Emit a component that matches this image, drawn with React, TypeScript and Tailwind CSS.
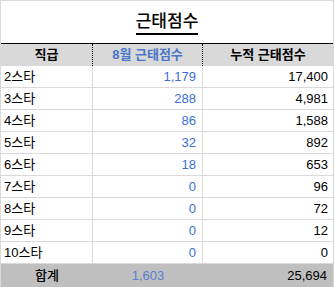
const rows: [string, string, string][] = [
  ['2스타', '1,179', '17,400'],
  ['3스타', '288', '4,981'],
  ['4스타', '86', '1,588'],
  ['5스타', '32', '892'],
  ['6스타', '18', '653'],
  ['7스타', '0', '96'],
  ['8스타', '0', '72'],
  ['9스타', '0', '12'],
  ['10스타', '0', '0'],
]

export default function App() {
  return (
    <div
      className="flex h-[287px] w-[334px] flex-col overflow-hidden border-x border-t border-[#dadada] bg-white text-[13px] text-black"
      style={{ fontFamily: '"Liberation Sans", "Noto Sans CJK KR", sans-serif' }}
    >
      <div className="flex h-[42px] items-center justify-center pt-[2px]">
        <span className="border-b-[2px] border-black pb-[1px] text-[17px] leading-[20px] font-medium">
          근태점수
        </span>
      </div>

      <div className="grid h-[23px] grid-cols-[92px_110px_1fr] border-t border-black bg-[#d9d9d9] font-bold">
        <div className="flex items-center justify-center border-r border-dotted border-black">직급</div>
        <div className="flex items-center justify-center border-r border-dotted border-black text-[#4a76c9]">
          8월 근태점수
        </div>
        <div className="flex items-center justify-center">누적 근태점수</div>
      </div>

      {rows.map(([rank, month, total]) => (
        <div
          key={rank}
          className="grid h-[22px] grid-cols-[92px_110px_1fr] border-b border-[#dadada]"
        >
          <div className="flex items-center border-r border-[#dadada] pl-[3px]">{rank}</div>
          <div className="flex items-center justify-end border-r border-[#dadada] pr-[6px] text-[#3a6fd6]">
            {month}
          </div>
          <div className="flex items-center justify-end pr-[5px]">{total}</div>
        </div>
      ))}

      <div className="grid flex-1 grid-cols-[92px_110px_1fr] bg-[#bfbfbf]">
        <div className="flex items-center justify-center font-medium">합계</div>
        <div className="flex items-center justify-center text-[#5a7fd0]">1,603</div>
        <div className="flex items-center justify-end pr-[6px]">25,694</div>
      </div>
    </div>
  )
}
